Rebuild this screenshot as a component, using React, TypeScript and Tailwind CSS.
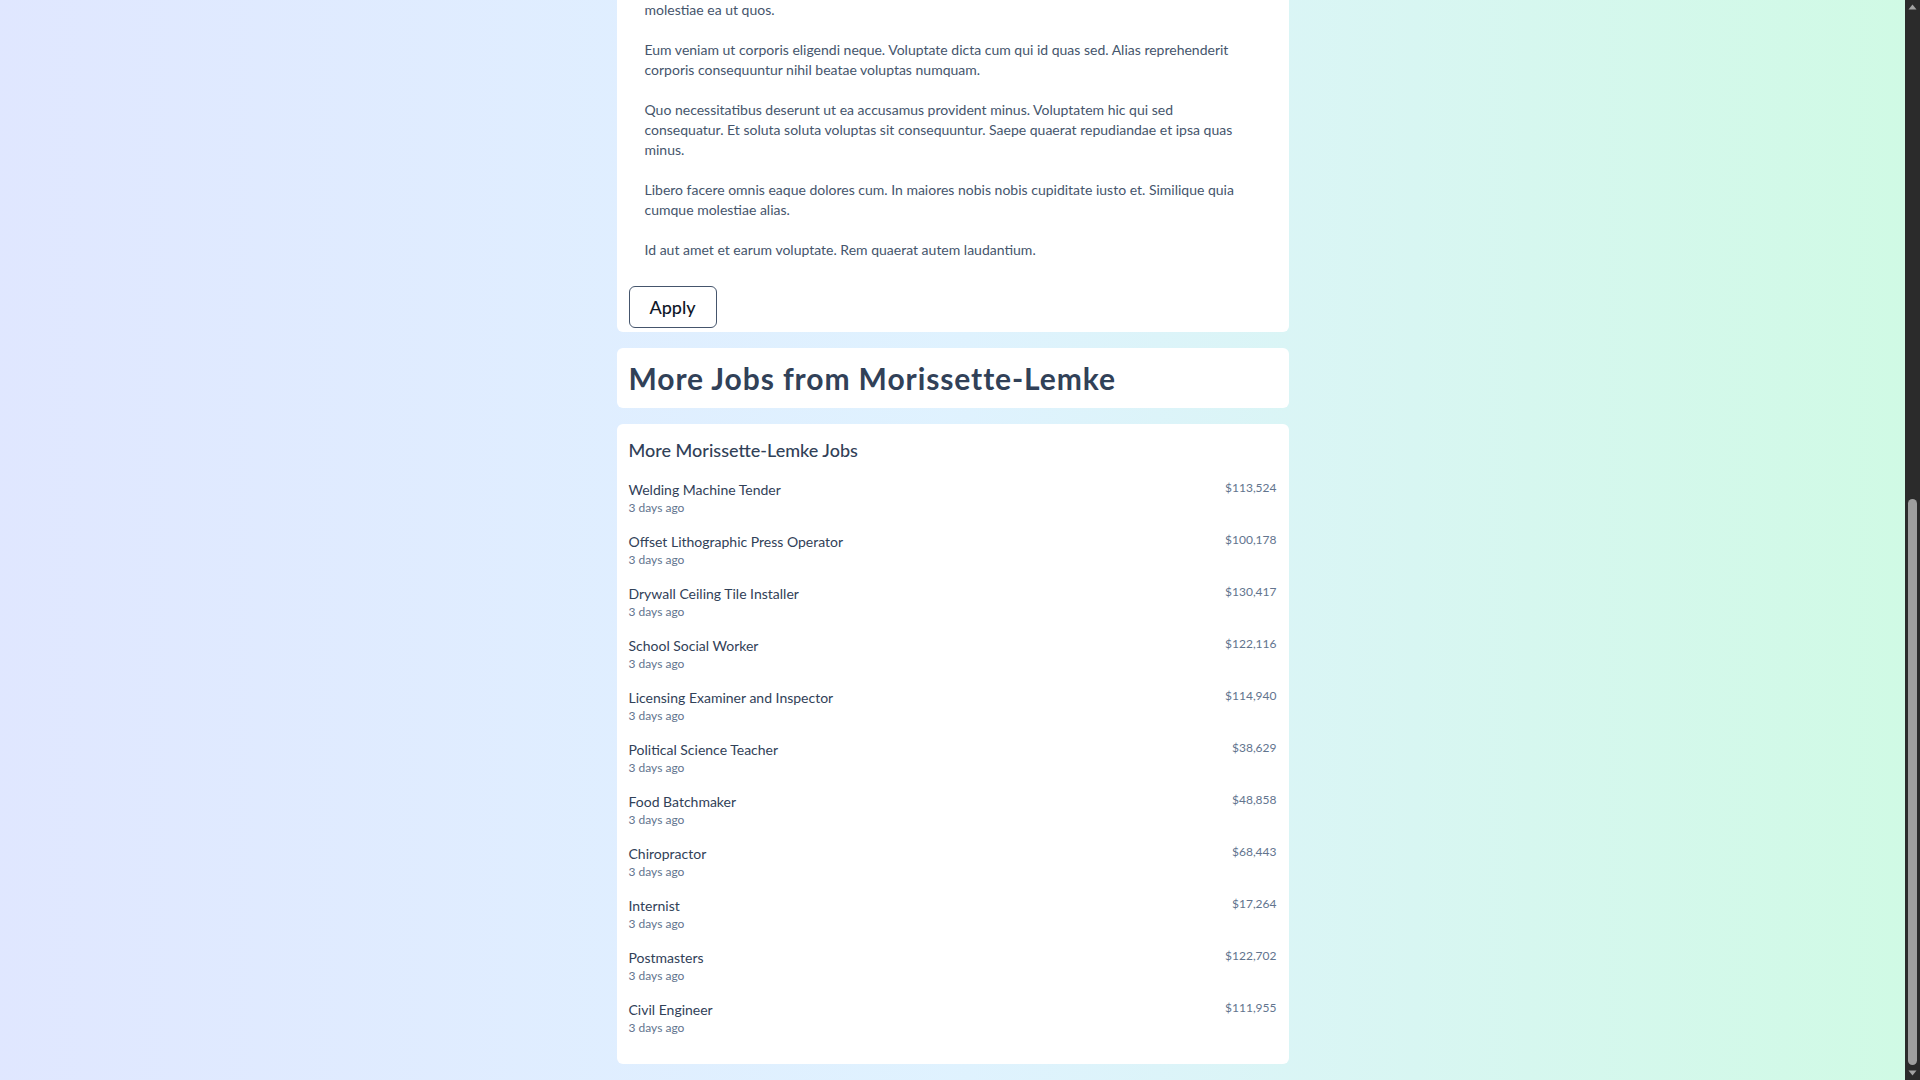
import React from 'react';

interface Job {
  title: string;
  posted: string;
  salary: string;
}

const jobs: Job[] = [
  { title: 'Welding Machine Tender', posted: '3 days ago', salary: '$113,524' },
  { title: 'Offset Lithographic Press Operator', posted: '3 days ago', salary: '$100,178' },
  { title: 'Drywall Ceiling Tile Installer', posted: '3 days ago', salary: '$130,417' },
  { title: 'School Social Worker', posted: '3 days ago', salary: '$122,116' },
  { title: 'Licensing Examiner and Inspector', posted: '3 days ago', salary: '$114,940' },
  { title: 'Political Science Teacher', posted: '3 days ago', salary: '$38,629' },
  { title: 'Food Batchmaker', posted: '3 days ago', salary: '$48,858' },
  { title: 'Chiropractor', posted: '3 days ago', salary: '$68,443' },
  { title: 'Internist', posted: '3 days ago', salary: '$17,264' },
  { title: 'Postmasters', posted: '3 days ago', salary: '$122,702' },
  { title: 'Civil Engineer', posted: '3 days ago', salary: '$111,955' },
];

// tail of the job description (the page is scrolled down to it)
const description: string[] = [
  'molestiae ea ut quos.',
  'Eum veniam ut corporis eligendi neque. Voluptate dicta cum qui id quas sed. Alias reprehenderit corporis consequuntur nihil beatae voluptas numquam.',
  'Quo necessitatibus deserunt ut ea accusamus provident minus. Voluptatem hic qui sed consequatur. Et soluta soluta voluptas sit consequuntur. Saepe quaerat repudiandae et ipsa quas minus.',
  'Libero facere omnis eaque dolores cum. In maiores nobis nobis cupiditate iusto et. Similique quia cumque molestiae alias.',
  'Id aut amet et earum voluptate. Rem quaerat autem laudantium.',
];

const ScrollBar: React.FC = () => (
  <div className="w-[15px] shrink-0 h-screen bg-[#2b2b2b] flex flex-col items-center">
    <svg width="15" height="15" viewBox="0 0 15 15" className="shrink-0">
      <path d="M3.5 9.5 L7.5 4.5 L11.5 9.5 Z" fill="#a3a3a3" />
    </svg>
    <div className="flex-1" />
    <div className="w-[9px] h-[566px] rounded-full bg-[#9f9f9f]" />
    <svg width="15" height="15" viewBox="0 0 15 15" className="shrink-0">
      <path d="M3.5 5.5 L7.5 10.5 L11.5 5.5 Z" fill="#a3a3a3" />
    </svg>
  </div>
);

const App: React.FC = () => {
  return (
    <div className="h-screen overflow-hidden flex" style={{ fontFamily: 'Lato, "Noto Sans", sans-serif' }}>
      <div className="flex-1 min-w-0 bg-linear-to-r from-indigo-100 via-sky-100 to-emerald-100 pb-4">
        <div className="max-w-2xl mx-auto flex flex-col gap-4">
          {/* Job description (bottom part) */}
          <div className="bg-white rounded-b-md px-3 pb-1">
            <div className="pl-4 space-y-5 text-sm leading-5 text-slate-600">
              {description.map((text, i) => (
                <p key={i} className="max-w-[600px]">{text}</p>
              ))}
            </div>

            <button className="mt-[26px] px-5 py-1.5 text-lg font-medium text-gray-900 border border-slate-600 rounded-md">
              Apply
            </button>
          </div>

          {/* Company heading */}
          <div className="bg-white rounded-md p-3">
            <h2 className="text-3xl font-bold tracking-[0.03em] text-slate-700">More Jobs from Morissette-Lemke</h2>
          </div>

          {/* Other jobs list */}
          <div className="bg-white rounded-md p-3 pb-5">
            <h3 className="mb-2 text-lg leading-7 font-medium text-slate-700">More Morissette-Lemke Jobs</h3>
            <ul>
              {jobs.map(job => (
                <li key={job.title} className="flex items-start justify-between py-2">
                  <div>
                    <div className="text-sm text-slate-700">{job.title}</div>
                    <div className="text-xs text-slate-500">{job.posted}</div>
                  </div>
                  <div className="text-xs text-slate-500">{job.salary}</div>
                </li>
              ))}
            </ul>
          </div>
        </div>
      </div>
      <ScrollBar />
    </div>
  );
};

export default App;
